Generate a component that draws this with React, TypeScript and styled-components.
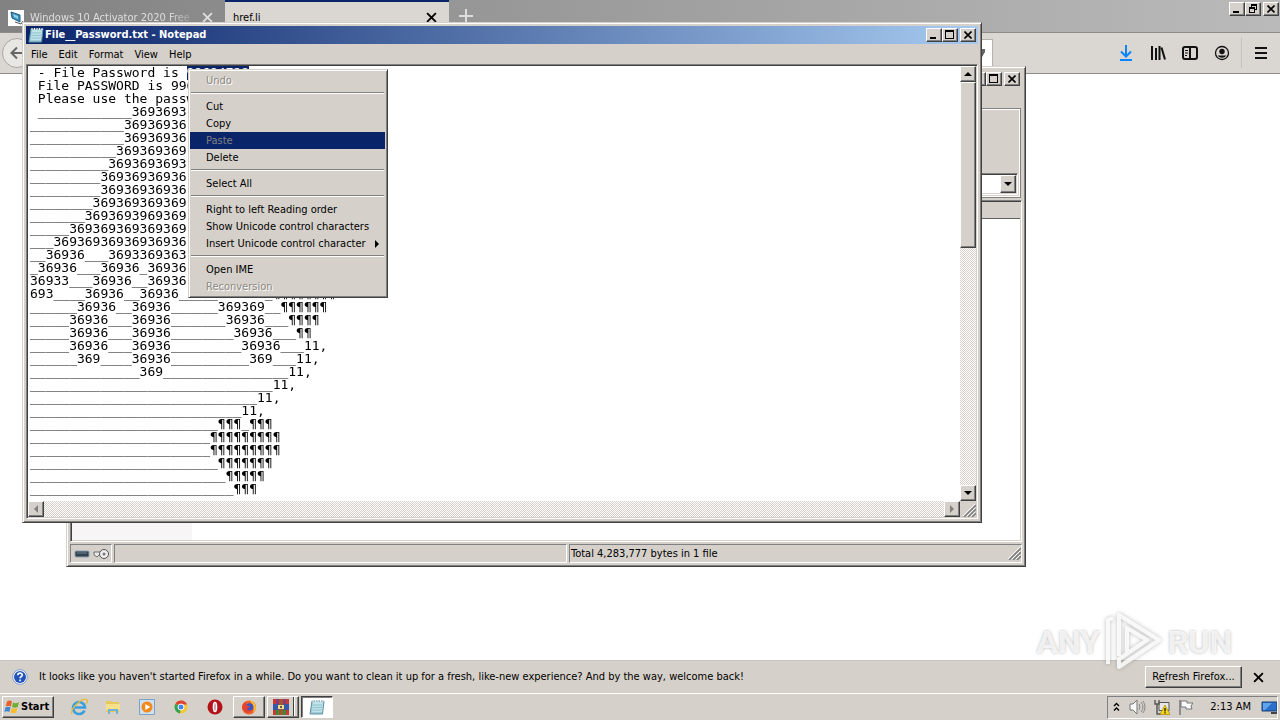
import React, { useEffect, useRef } from 'react';
import styled, { createGlobalStyle, css } from 'styled-components';

const face = '#d5d0c9';
const navy = '#0a246a';
const uiFont = "'DejaVu Sans Condensed', 'DejaVu Sans', sans-serif";

const GlobalStyle = createGlobalStyle`
  * { box-sizing: border-box; }
  body { margin: 0; background: #fff; color: #000; font: 11px/16px ${uiFont}; }
  button, select, textarea { font: inherit; color: inherit; margin: 0; padding: 0; border: 0; border-radius: 0; background: none; }
  svg { display: block; flex: none; }
`;

const raised = css`
  border: 1px solid;
  border-color: #fff #404040 #404040 #fff;
  box-shadow: inset -1px -1px 0 #808080;
  background: ${face};
`;

const Desktop = styled.div`
  position: relative;
  display: flex;
  flex-direction: column;
  min-height: 100vh;
  overflow: hidden;
`;

/* Firefox */
const TabStrip = styled.header`
  display: flex;
  height: 33px;
  background: linear-gradient(90deg, #828282, #bababa);
  border-bottom: 1px solid #8e8c89;
`;
const Tabs = styled.nav`
  display: flex;
  flex: 1;
`;
const Tab = styled.div<{ $active?: boolean }>`
  display: flex;
  align-items: center;
  width: ${p => (p.$active ? 224 : 225)}px;
  height: 33px;
  padding: 0 10px 0 8px;
  gap: 6px;
  color: ${p => (p.$active ? '#000' : '#dedede')};
  background: ${p => (p.$active ? '#dad6d1' : 'transparent')};
  border-top: 2px solid ${p => (p.$active ? navy : 'transparent')};
`;
const TabLabel = styled.button`
  flex: 1;
  white-space: nowrap;
  text-align: left;
`;
const FadedLabel = styled(TabLabel)`
  mask-image: linear-gradient(90deg, #000 85%, rgba(0, 0, 0, 0.2));
`;
const IconButton = styled.button`
  display: flex;
  align-items: center;
  justify-content: center;
  width: 16px;
  height: 16px;
  flex: none;
`;
const NewTab = styled(IconButton)`
  width: 34px;
  height: 31px;
  color: #dedede;
`;
const CaptionRow = styled.div`
  display: flex;
  padding: 2px 1px;
`;
const CaptionButton = styled.button<{ $spaced?: boolean }>`
  ${raised}
  display: flex;
  align-items: center;
  justify-content: center;
  width: 16px;
  height: 14px;
  flex: none;
  margin-left: ${p => (p.$spaced ? 2 : 0)}px;
`;
const NavBar = styled.div`
  display: flex;
  align-items: center;
  height: 41px;
  padding: 0 11px 0 2px;
  background: #dad6d1;
  border-bottom: 1px solid #8e8c89;
`;
const BackButton = styled(IconButton)`
  width: 30px;
  height: 30px;
  border-radius: 50%;
  border: 1px solid #aaa7a3;
  background: #e9e7e4;
`;
const AddressBar = styled.div`
  display: flex;
  align-items: center;
  justify-content: flex-end;
  height: 28px;
  flex: 1;
  margin: 0 125px 0 40px;
  padding-right: 6px;
  background: #fff;
  border: 1px solid #b5b2ae;
`;
const ToolIcons = styled.div`
  display: flex;
  align-items: center;
  gap: 16px;
`;
const ToolDivider = styled.div`
  width: 1px;
  height: 30px;
  margin: 0 -5px 0 -5px;
  background: #c4c0bb;
`;
const Page = styled.main`
  flex: 1;
  background: #fff;
`;
const Notice = styled.aside`
  display: flex;
  align-items: center;
  height: 33px;
  padding: 0 14px 0 12px;
  gap: 11px;
  background: ${face};
  border-top: 1px solid #c4c4c0;
`;
const NoticeText = styled.span`
  flex: 1;
  white-space: nowrap;
`;
const NoticeActions = styled.div`
  display: flex;
  align-items: center;
  gap: 8px;
`;
const PushButton = styled.button`
  ${raised}
  width: 97px;
  height: 22px;
`;

/* Windows */
const Window = styled.section<{ $x: number; $y: number }>`
  position: absolute;
  left: ${p => p.$x}px;
  top: ${p => p.$y}px;
  width: 75%;
  padding: 3px;
  background: ${face};
  border: 1px solid;
  border-color: ${face} #404040 #404040 ${face};
  box-shadow: inset 1px 1px 0 #fff, inset -1px -1px 0 #808080;
`;
const TitleBar = styled.div<{ $active?: boolean }>`
  display: flex;
  align-items: center;
  height: 18px;
  padding: 0 2px;
  gap: 1px;
  color: #fff;
  font-weight: bold;
  background: ${p => (p.$active ? `linear-gradient(90deg, ${navy}, #a6caf0)` : face)};
`;
const Title = styled.span`
  flex: 1;
  white-space: nowrap;
`;
const TitleButtons = styled.div`
  display: flex;
  color: #000;
`;
const MenuBar = styled.nav`
  display: flex;
  height: 20px;
  gap: 11px;
  padding: 1px 5px 0;
`;
const Sunken = styled.div`
  border: 1px solid;
  border-color: #808080 #fff #fff #808080;
  box-shadow: inset 1px 1px 0 #404040, inset -1px -1px 0 ${face};
  padding: 1px;
`;
const Editor = styled(Sunken)`
  display: grid;
  grid-template-columns: 1fr 16px;
  grid-template-rows: 435px 16px;
  background: #fff;
`;
const TextArea = styled.textarea`
  display: block;
  width: 100%;
  height: 100%;
  padding: 0 2px;
  resize: none;
  outline: none;
  overflow: hidden;
  will-change: transform;
  font: 13px/13px 'DejaVu Sans Mono', monospace;
  white-space: pre;
  &::selection { background: ${navy}; color: #fff; }
`;
const Track = styled.div<{ $horizontal?: boolean }>`
  display: flex;
  flex-direction: ${p => (p.$horizontal ? 'row' : 'column')};
  justify-content: space-between;
  background: repeating-conic-gradient(#fff 0 25%, ${face} 0 50%) 0 0 / 2px 2px;
`;
const ScrollButton = styled.button`
  ${raised}
  display: flex;
  align-items: center;
  justify-content: center;
  width: 16px;
  height: 16px;
  flex: none;
`;
const Thumb = styled.div`
  ${raised}
  height: 166px;
  margin-bottom: auto;
`;
const GripCell = styled.div`
  display: flex;
  align-items: flex-end;
  justify-content: flex-end;
  background: ${face};
`;

const ArchiveMenu = styled.div`
  height: 20px;
`;
const ToolPanel = styled.div`
  display: flex;
  flex-direction: column;
  justify-content: flex-end;
  height: 90px;
  margin-right: 1px;
  padding: 2px;
  border: 1px solid #808080;
  box-shadow: inset 0 1px 0 #fff, inset -1px -1px 0 #fff;
`;
const Combo = styled(Sunken)`
  display: flex;
  height: 22px;
  background: #fff;
`;
const ComboSelect = styled.select`
  flex: 1;
  appearance: none;
  background: #fff;
`;
const ComboArrow = styled(ScrollButton)`
  height: 18px;
`;
const FileList = styled(Sunken)`
  display: flex;
  flex-direction: column;
  height: 342px;
  margin-top: 2px;
`;
const ListHeader = styled.div`
  height: 17px;
  background: ${face};
  border-bottom: 1px solid #606060;
`;
const ListBody = styled.div`
  flex: 1;
  background: linear-gradient(90deg, #f7f5f5 120px, #fff 120px);
`;
const StatusBar = styled.footer`
  display: grid;
  grid-template-columns: 42px 1fr 1fr;
  gap: 2px;
  height: 19px;
  margin-top: 2px;
`;
const StatusPane = styled.div`
  display: flex;
  align-items: center;
  gap: 2px;
  padding-left: 1px;
  white-space: nowrap;
  border: 1px solid;
  border-color: #808080 #fff #fff #808080;
`;
const StatusEnd = styled(StatusPane)`
  justify-content: space-between;
`;

/* Context menu */
const Popup = styled.div`
  position: absolute;
  left: 188px;
  top: 69px;
  width: 200px;
  padding: 2px 2px 2px 1px;
  background: ${face};
  border: 1px solid;
  border-color: ${face} #404040 #404040 ${face};
  box-shadow: inset 1px 1px 0 #fff, inset -1px -1px 0 #808080;
`;
const PopupItem = styled.button<{ $state?: 'disabled' | 'hot' }>`
  display: flex;
  align-items: center;
  justify-content: space-between;
  width: 100%;
  height: 17px;
  padding: 0 5px 0 16px;
  white-space: nowrap;
  ${p => p.$state === 'disabled' && css`color: #8c8984; text-shadow: 1px 1px 0 #fff;`}
  ${p => p.$state === 'hot' && css`color: #808080; background: ${navy};`}
`;
const PopupLine = styled.hr`
  height: 2px;
  margin: 3px 1px 4px;
  border: 0;
  border-top: 1px solid #808080;
  border-bottom: 1px solid #fff;
`;

/* Taskbar */
const Taskbar = styled.footer`
  display: flex;
  align-items: center;
  height: 27px;
  padding: 0 2px 0 2px;
  background: ${face};
  border-top: 1px solid #fff;
`;
const StartButton = styled.button`
  ${raised}
  display: flex;
  align-items: center;
  gap: 1px;
  width: 52px;
  height: 22px;
  padding-left: 1px;
  font-weight: bold;
`;
const Launchers = styled.div`
  display: flex;
  gap: 14px;
  margin: 0 8px 0 15px;
`;
const Launcher = styled(IconButton)`
  width: 20px;
  height: 20px;
`;
const Running = styled.div`
  display: flex;
  gap: 2px;
`;
const TaskButton = styled.button<{ $pressed?: boolean; $stacked?: boolean }>`
  ${raised}
  display: flex;
  align-items: center;
  justify-content: center;
  width: 32px;
  height: 22px;
  ${p => p.$pressed && css`
    background: #fff;
    border-color: #404040 #fff #fff #404040;
    box-shadow: inset 1px 1px 0 #808080;
  `}
  ${p => p.$stacked && css`
    padding-right: 5px;
    background: linear-gradient(90deg, ${face} 25px, #404040 25px 26px, #fff 26px 27px, ${face} 27px);
  `}
`;
const Tray = styled.div`
  display: flex;
  align-items: center;
  gap: 8px;
  height: 23px;
  margin-left: auto;
  padding: 0 0 0 4px;
  border: 1px solid;
  border-color: #808080 #fff #fff #808080;
`;
const Clock = styled.time`
  margin: 0 2px 0 8px;
  white-space: nowrap;
`;

const Watermark = styled.div`
  position: absolute;
  right: 48px;
  bottom: 48px;
  display: flex;
  align-items: center;
  gap: 5px;
  color: rgba(255, 255, 255, 0.8);
  font: bold 32px/60px 'Roboto', sans-serif;
  text-shadow: 0 0 3px rgba(130, 130, 130, 0.6);
  pointer-events: none;
`;
const PlayMark = styled.svg`
  filter: drop-shadow(0 0 2px rgba(120, 120, 120, 0.6));
`;

const MinGlyph = () => (
  <svg width="10" height="10" shapeRendering="crispEdges"><path d="M1 7h6v2H1z" /></svg>
);
const MaxGlyph = () => (
  <svg width="10" height="10" shapeRendering="crispEdges"><path d="M0 0h9v9H0zM1 2v6h7V2z" fillRule="evenodd" /></svg>
);
const RestoreGlyph = () => (
  <svg width="10" height="10" shapeRendering="crispEdges"><path fillRule="evenodd" d="M3 0h6v6H7V5h1V2H4v1H3zM1 3h6v6H1zM2 5v3h4V5z" /></svg>
);
const CloseGlyph = () => (
  <svg width="8" height="8" viewBox="0 0 8 8"><path d="M0.5 0.5l7 7M7.5 0.5l-7 7" stroke="#000" strokeWidth="1.6" /></svg>
);
const Cross = ({ size = 11 }: { size?: number }) => (
  <svg width={size} height={size} viewBox="0 0 10 10"><path d="M1 1l8 8M9 1l-8 8" stroke="currentColor" strokeWidth="1.7" /></svg>
);
const Arrow = ({ dir, dim }: { dir: 'up' | 'down' | 'left' | 'right'; dim?: boolean }) => {
  const d = { up: 'M4 2l4 4H0z', down: 'M0 2h8L4 6z', left: 'M2 4l4-4v8z', right: 'M6 4L2 0v8z' }[dir];
  return <svg width="8" height="8"><path d={d} fill={dim ? '#808080' : '#000'} /></svg>;
};
const Grip = () => (
  <svg width="13" height="13"><path d="M1 13L13 1M5 13l8-8M9 13l4-4" stroke="#808080" strokeWidth="1.6" /><path d="M0 12L12 0M4 12l8-8M8 12l4-4" stroke="#fff" /></svg>
);
const NotepadIcon = () => (
  <svg width="16" height="16" viewBox="0 0 16 16">
    <path d="M3 2h12l-1.500 13H1z" fill="#9fcbd6" stroke="#5e8fa3" />
    <path d="M4 3h10l-1 10H3z" fill="#bfe3e8" />
    <path d="M4 6h9M4 8.500h9M3.500 11h9" stroke="#7fb3c2" strokeWidth=".7" />
    <path d="M4 1v2M6.500 1v2M9 1v2M11.500 1v2M14 1v2" stroke="#f4f4f4" />
  </svg>
);
const SiteIcon = () => (
  <svg width="16" height="16" viewBox="0 0 16 16"><path fill="#fff" d="M0 0h16v16H0z" /><path d="M3 2l9 3v7L4 8z" fill="#3b8fb8" stroke="#1e5f85" /><path d="M5 4l5 2v3L6 7z" fill="#8ed0ea" /><path d="M7 12l6 2 2-3" stroke="#555" fill="none" /></svg>
);
const HelpIcon = () => (
  <svg width="16" height="16" viewBox="0 0 16 16"><circle cx="8" cy="8" r="7.300" fill="#fff" stroke="#7e9fd6" /><circle cx="8" cy="8" r="6" fill="#2453b8" /><path d="M5.800 6.300c0-3 4.500-2.800 4.500-.300 0 1.600-2.200 1.600-2.200 3.200M8.100 10.500v1.700" stroke="#fff" strokeWidth="1.600" fill="none" /></svg>
);

const rows: string[] = [
  ' - File Password is 99694728',
  ' File PASSWORD is 99694728',
  ' Please use the password to open',
  ' ' + '_'.repeat(12) + '3693693',
  '_'.repeat(12) + '36936936',
  '_'.repeat(12) + '36936936',
  '_'.repeat(11) + '369369369',
  '_'.repeat(10) + '3693693693',
  '_'.repeat(9) + '36936936936',
  '_'.repeat(9) + '36936936936',
  '_'.repeat(8) + '369369369369',
  '_'.repeat(7) + '3693693969369',
  '_'.repeat(5) + '369369369369369',
  '___36936936936936936',
  '__36936___3693369363',
  '_36936___36936_36936',
  '36933___36936__36936',
  '693____36936__36936_____369369_' + '¶'.repeat(8),
  '______36936__36936______369369__' + '¶'.repeat(6),
  '_____36936___36936_______36936___' + '¶'.repeat(4),
  '_____36936___36936________36936___¶¶',
  '_____36936___36936_________36936___11,',
  '______369____36936__________369___11,',
  '_'.repeat(14) + '369' + '_'.repeat(16) + '11,',
  '_'.repeat(31) + '11,',
  '_'.repeat(29) + '11,',
  '_'.repeat(27) + '11,',
  '_'.repeat(24) + '¶¶¶_¶¶¶',
  '_'.repeat(23) + '¶'.repeat(9),
  '_'.repeat(23) + '¶'.repeat(9),
  '_'.repeat(24) + '¶'.repeat(7),
  '_'.repeat(25) + '¶'.repeat(5),
  '_'.repeat(26) + '¶'.repeat(3),
];

function CaptionButtons({ restore }: { restore?: boolean }) {
  return (
    <>
      <CaptionButton aria-label="Minimize"><MinGlyph /></CaptionButton>
      <CaptionButton aria-label={restore ? 'Restore' : 'Maximize'}>{restore ? <RestoreGlyph /> : <MaxGlyph />}</CaptionButton>
      <CaptionButton aria-label="Close" $spaced><CloseGlyph /></CaptionButton>
    </>
  );
}

function Browser() {
  return (
    <>
      <TabStrip>
        <Tabs>
          <Tab>
            <SiteIcon />
            <FadedLabel>Windows 10 Activator 2020 Free</FadedLabel>
            <IconButton aria-label="Close tab"><Cross /></IconButton>
          </Tab>
          <Tab $active>
            <TabLabel>href.li</TabLabel>
            <IconButton aria-label="Close tab"><Cross /></IconButton>
          </Tab>
          <NewTab aria-label="New tab">
            <svg width="14" height="14"><path d="M7 0v14M0 7h14" stroke="currentColor" strokeWidth="2" /></svg>
          </NewTab>
        </Tabs>
        <CaptionRow><CaptionButtons restore /></CaptionRow>
      </TabStrip>
      <NavBar>
        <BackButton aria-label="Back">
          <svg width="14" height="14"><path d="M13 7H2M7 1.500L1.500 7 7 12.500" stroke="#666" strokeWidth="2" fill="none" /></svg>
        </BackButton>
        <AddressBar>
          <svg width="10" height="10"><path d="M0 1h9v3L6 9H4l2-5H0z" fill="#666" /></svg>
        </AddressBar>
        <ToolIcons>
          <IconButton aria-label="Downloads">
            <svg width="16" height="16" fill="none" stroke="#0a84ff" strokeWidth="2"><path d="M8 0v11M3 6.500L8 11.500l5-5M2 15h12" /></svg>
          </IconButton>
          <IconButton aria-label="Library">
            <svg width="16" height="16" fill="none" stroke="#111" strokeWidth="2"><path d="M2 1v14M6 3v12M9.500 1v14M11.500 2.500L15 14.500" /></svg>
          </IconButton>
          <IconButton aria-label="Sidebars">
            <svg width="16" height="16" fill="none" stroke="#111" strokeWidth="2"><rect x="1" y="2" width="14" height="12" rx="2" /><path d="M8 2v12" /><path d="M3 5.500h3M3 8h3M3 10.500h2" strokeWidth="1" /></svg>
          </IconButton>
          <IconButton aria-label="Account">
            <svg width="16" height="16"><circle cx="8" cy="8" r="6.500" fill="none" stroke="#111" strokeWidth="1.300" /><circle cx="8" cy="6.500" r="2.700" fill="#111" /><path d="M3.500 10.500h9A5.500 5.500 0 0 1 3.500 10.500z" fill="#111" /></svg>
          </IconButton>
          <ToolDivider />
          <IconButton aria-label="Menu">
            <svg width="16" height="16" stroke="#111" strokeWidth="2"><path d="M2 3h12M2 8h12M2 13h12" /></svg>
          </IconButton>
        </ToolIcons>
      </NavBar>
      <Page />
      <Notice>
        <HelpIcon />
        <NoticeText>It looks like you haven't started Firefox in a while. Do you want to clean it up for a fresh, like-new experience? And by the way, welcome back!</NoticeText>
        <NoticeActions>
          <PushButton>R<u>e</u>fresh Firefox...</PushButton>
          <IconButton aria-label="Dismiss"><Cross /></IconButton>
        </NoticeActions>
      </Notice>
    </>
  );
}

function ArchiveWindow() {
  return (
    <Window $x={66} $y={66} aria-label="Archive">
      <TitleBar>
        <Title />
        <TitleButtons><CaptionButtons /></TitleButtons>
      </TitleBar>
      <ArchiveMenu />
      <ToolPanel>
        <Combo>
          <ComboSelect aria-label="Path" />
          <ComboArrow aria-label="Show paths"><Arrow dir="down" /></ComboArrow>
        </Combo>
      </ToolPanel>
      <FileList>
        <ListHeader />
        <ListBody />
      </FileList>
      <StatusBar>
        <StatusPane>
          <svg width="38" height="16">
            <rect x="3" y="5" width="14" height="6" rx="1" fill="#33424f" stroke="#8ea0b0" /><path d="M5 7h10" stroke="#70808c" />
            <path d="M22 6h9v3h-4l-2 2-3-2z" fill="#e8e8e8" stroke="#555" strokeWidth=".8" /><circle cx="32" cy="8" r="4.500" fill="#eee" stroke="#555" /><circle cx="32" cy="8" r="1.500" fill="#777" />
          </svg>
        </StatusPane>
        <StatusPane />
        <StatusEnd>
          <span>Total 4,283,777 bytes in 1 file</span>
          <Grip />
        </StatusEnd>
      </StatusBar>
    </Window>
  );
}

function Notepad() {
  const area = useRef<HTMLTextAreaElement>(null);
  useEffect(() => {
    area.current?.focus();
    area.current?.setSelectionRange(20, 28);
  }, []);
  return (
    <Window $x={22} $y={22} aria-label="Notepad">
      <TitleBar $active>
        <NotepadIcon />
        <Title>File__Password.txt - Notepad</Title>
        <TitleButtons><CaptionButtons /></TitleButtons>
      </TitleBar>
      <MenuBar>
        {['File', 'Edit', 'Format', 'View', 'Help'].map(name => <button key={name}>{name}</button>)}
      </MenuBar>
      <Editor>
        <TextArea ref={area} aria-label="Document" defaultValue={rows.join('\n')} wrap="off" spellCheck={false} />
        <Track>
          <ScrollButton aria-label="Scroll up"><Arrow dir="up" /></ScrollButton>
          <Thumb />
          <ScrollButton aria-label="Scroll down"><Arrow dir="down" /></ScrollButton>
        </Track>
        <Track $horizontal>
          <ScrollButton aria-label="Scroll left"><Arrow dir="left" dim /></ScrollButton>
          <ScrollButton aria-label="Scroll right"><Arrow dir="right" dim /></ScrollButton>
        </Track>
        <GripCell><Grip /></GripCell>
      </Editor>
    </Window>
  );
}

function ContextMenu() {
  return (
    <Popup role="menu">
      <PopupItem role="menuitem" $state="disabled">Undo</PopupItem>
      <PopupLine />
      <PopupItem role="menuitem">Cut</PopupItem>
      <PopupItem role="menuitem">Copy</PopupItem>
      <PopupItem role="menuitem" $state="hot">Paste</PopupItem>
      <PopupItem role="menuitem">Delete</PopupItem>
      <PopupLine />
      <PopupItem role="menuitem">Select All</PopupItem>
      <PopupLine />
      <PopupItem role="menuitem">Right to left Reading order</PopupItem>
      <PopupItem role="menuitem">Show Unicode control characters</PopupItem>
      <PopupItem role="menuitem">
        Insert Unicode control character
        <svg width="5" height="8"><path d="M0 0l4 4-4 4z" /></svg>
      </PopupItem>
      <PopupLine />
      <PopupItem role="menuitem">Open IME</PopupItem>
      <PopupItem role="menuitem" $state="disabled">Reconversion</PopupItem>
    </Popup>
  );
}

function SystemBar() {
  return (
    <Taskbar>
      <StartButton>
        <svg width="16" height="16" viewBox="0 0 16 16">
          <path d="M3 2.500c2-1.500 3.500-1.200 5 0L6.800 7.500c-1.700-1-3.200-1-5 0z" fill="#e8602c" />
          <path d="M9 3.500c2 1 3.700 1 6-.500L13.700 8c-2 1-3.700 1-5.700 0z" fill="#6fae35" />
          <path d="M1.500 8.500c2-1 3.300-1 5 0L5.300 13c-1.700-1-3.300-1-5 0z" fill="#3f86d8" />
          <path d="M7.700 9c2 1 3.500 1 5.600 0L12 13.500c-2 1-3.500 1-5.500 0z" fill="#f4bd2b" />
        </svg>
        Start
      </StartButton>
      <Launchers>
        <Launcher aria-label="Internet Explorer">
          <svg width="18" height="18" viewBox="0 0 18 18" fill="none"><path d="M14.500 12.500A6 6 0 1 1 15 9.500H4" stroke="#3aa0dd" strokeWidth="2.600" /><path d="M2 16C-1 12 13-2 17 2c1 1 0 3-1 4" stroke="#e8bc3a" strokeWidth="1.300" /></svg>
        </Launcher>
        <Launcher aria-label="Explorer">
          <svg width="18" height="18" viewBox="0 0 18 18"><path d="M2 3h5l1 1h7v10H2z" fill="#e8c65a" /><path d="M2 6h14v6H2z" fill="#f6e08c" /><path d="M4 16v-5h10v5h-2v-3H6v3z" fill="#6fb3dc" /></svg>
        </Launcher>
        <Launcher aria-label="Media Player">
          <svg width="18" height="18" viewBox="0 0 18 18"><path d="M1.500 1.500h15v15h-15z" fill="#cfe0ef" stroke="#7ba3c9" /><circle cx="9" cy="9" r="5.500" fill="#f28a1b" /><path d="M7.300 6v6l5-3z" fill="#fff" /></svg>
        </Launcher>
        <Launcher aria-label="Chrome">
          <svg width="16" height="16" viewBox="0 0 16 16"><circle cx="8" cy="8" r="6.500" fill="#f5c730" /><path d="M8 8L2.400 4.700A6.500 6.500 0 0 1 14 5.500H8z" fill="#dd4436" /><path d="M8 8l-1 6.400A6.500 6.500 0 0 1 2.400 4.700z" fill="#30a452" /><circle cx="8" cy="8" r="3" fill="#4486f0" stroke="#fff" /></svg>
        </Launcher>
        <Launcher aria-label="Opera">
          <svg width="16" height="16" viewBox="0 0 16 16"><circle cx="8" cy="8" r="7.500" fill="#b3121a" /><ellipse cx="8" cy="8" rx="2.300" ry="5.300" fill="#fff" /><ellipse cx="8" cy="8" rx="1" ry="4" fill="#c9a8a8" /></svg>
        </Launcher>
      </Launchers>
      <Running>
        <TaskButton aria-label="Firefox">
          <svg width="16" height="16" viewBox="0 0 16 16"><circle cx="8" cy="8.500" r="7" fill="#f0602a" /><path d="M8 1c4 1 7 4 7 8a7 7 0 0 1-3 5c2-6 0-9-4-13z" fill="#fbc02d" /><circle cx="8.500" cy="8" r="3.800" fill="#3b55c9" /><path d="M1 8c1-4 3-5 4-5-1 3 1 4 4 4-1 2-3 2-3 3 1 2 4 2 5 1-1 4-9 4-10-3z" fill="#e5432d" /></svg>
        </TaskButton>
        <TaskButton aria-label="WinRAR" $stacked>
          <svg width="18" height="18" viewBox="0 0 18 18"><path d="M1 1h16v5H1z" fill="#8c3a7c" /><path d="M1 6h16v6H1z" fill="#3558a8" /><path d="M1 12h16v5H1z" fill="#3d8a3a" /><path d="M1 1h3v5H1zM14 1h3v5h-3zM1 12h3v5H1zM14 12h3v5h-3z" fill="#c63b32" /><path d="M7 1h4v16H7z" fill="#a5542c" /><path d="M6 7h6v4H6z" fill="#f1dc8a" /><path d="M8 8h2v2H8z" fill="#555" /></svg>
        </TaskButton>
        <TaskButton aria-label="Notepad" $pressed><NotepadIcon /></TaskButton>
      </Running>
      <Tray>
        <svg width="9" height="12" fill="none" stroke="#000" strokeWidth="1.400"><path d="M2 5l2.500-2.500L7 5M2 9.500L4.500 7 7 9.500" /></svg>
        <svg width="17" height="16" viewBox="0 0 17 16"><path d="M1 5h3l4-4v14l-4-4H1z" fill="#f8f8f8" stroke="#777" /><path d="M10 5q2 3 0 6M12 3q4 5 0 10M14 2q4 6 0 12" stroke="#888" fill="none" /></svg>
        <svg width="16" height="16" viewBox="0 0 16 16"><path d="M5 3.500h10v8H5z" fill="#e6e6e6" stroke="#555" /><path d="M1 1v4h4V1M3 5v10h4" stroke="#555" fill="none" strokeWidth="1.400" /><path d="M11 6l5 9.500H6z" fill="#f8d81c" stroke="#a98a00" strokeWidth=".7" /><path d="M11 9v3.500M11 13.300v1.200" stroke="#000" strokeWidth="1.200" /></svg>
        <svg width="16" height="16" viewBox="0 0 16 16"><path d="M2 1v15" stroke="#777" strokeWidth="1.500" /><path d="M3 2h6v2h6l-2 3 1 3H8V8H3z" fill="#fafafa" stroke="#777" /></svg>
        <Clock>2:13 AM</Clock>
        <svg width="16" height="16" viewBox="0 0 16 16"><path d="M1 3h15v9H1z" fill="#2b6fc8" stroke="#1b3f77" /><path d="M2 4h9L4 11H2z" fill="#5fa4ea" /><path d="M10 13h6v2h-6z" fill="#444" /></svg>
      </Tray>
    </Taskbar>
  );
}

export default function App() {
  return (
    <Desktop>
      <GlobalStyle />
      <Browser />
      <SystemBar />
      <ArchiveWindow />
      <Notepad />
      <ContextMenu />
      <Watermark>
        <span>ANY</span>
        <PlayMark width="58" height="60" viewBox="0 0 58 60" fill="none">
          <path d="M3 52V8l5-2M14 44V3l40 25-40 27v-8l28-19-20-12v24" stroke="rgba(255,255,255,.85)" strokeWidth="4" strokeLinejoin="round" />
        </PlayMark>
        <span>RUN</span>
      </Watermark>
    </Desktop>
  );
}
